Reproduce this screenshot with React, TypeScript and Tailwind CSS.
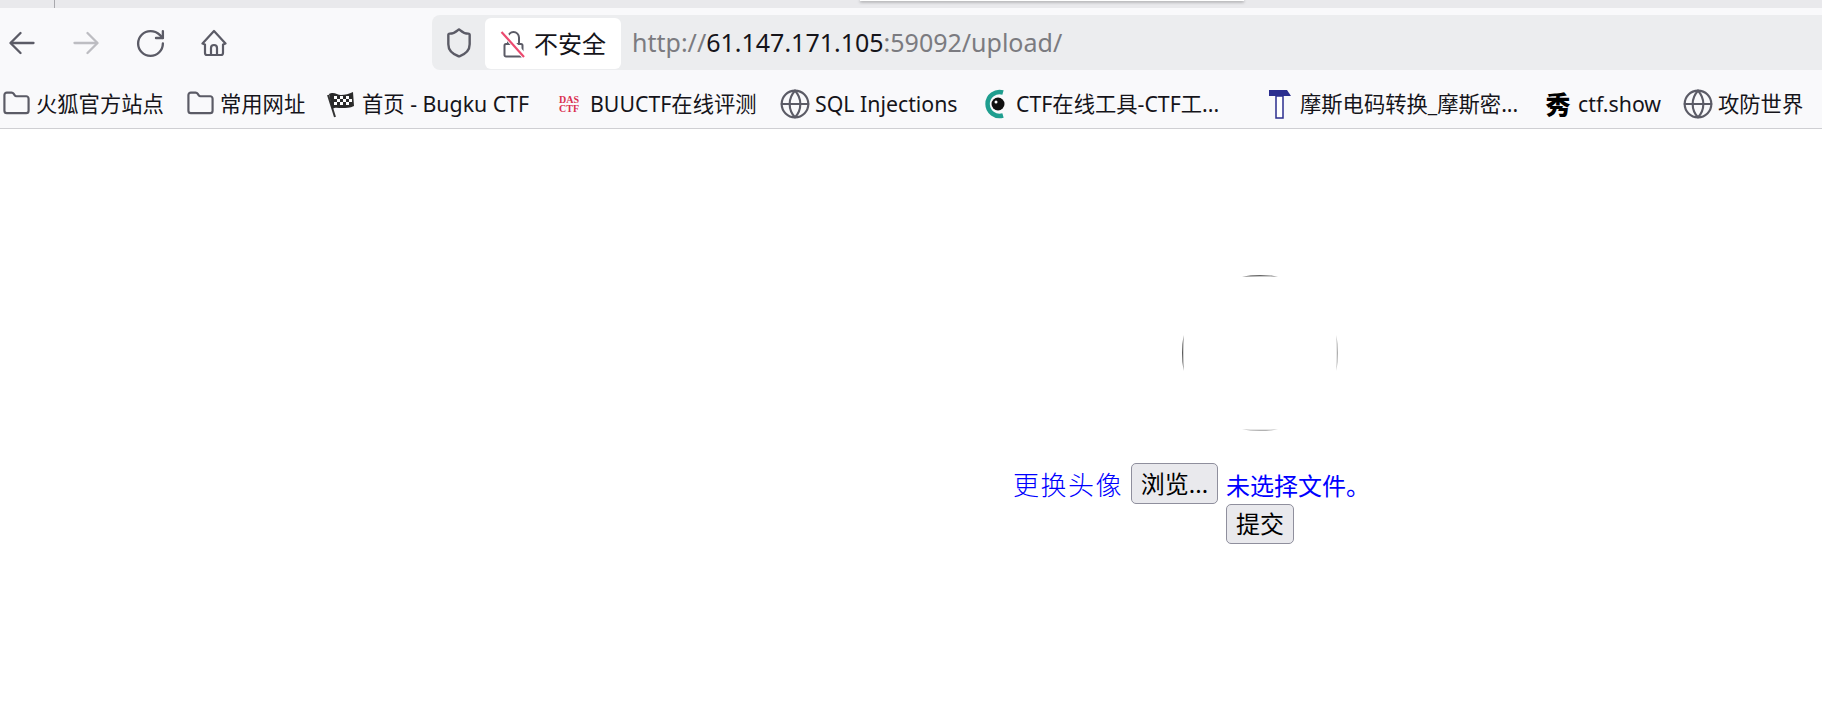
import React from 'react';
import { RotateCw, Shield, Globe, Folder } from 'lucide-react';

const uiFont = "font-['Noto_Sans','Noto_Sans_CJK_SC',sans-serif]";

function NavArrow({ color, flip }: { color: string; flip?: boolean }) {
  return (
    <svg width="26" height="24" viewBox="0 0 26 24" fill="none" stroke={color} strokeWidth="2.300" strokeLinecap="round" strokeLinejoin="round" className={flip ? 'rotate-180' : ''}>
      <path d="M24.500 12H2" />
      <path d="M11.500 2 1.500 12l10 10" />
    </svg>
  );
}

function HomeIcon() {
  return (
    <svg width="26" height="28" viewBox="0 0 26 28" fill="none" stroke="#5b5b66" strokeWidth="2.200" strokeLinejoin="round">
      <path d="M1.500 14.500 13 2l11.500 12.500-2.500 1V24a2 2 0 0 1-2 2H6a2 2 0 0 1-2-2v-8.500z" />
      <path d="M10 26v-7a3 3 0 0 1 6 0v7" />
    </svg>
  );
}

function LockOff() {
  return (
    <svg width="26" height="28" viewBox="0 0 26 28" fill="none">
      <path d="M8 13V7.500a5.500 5.500 0 0 1 11 0V14" stroke="#5b5b66" strokeWidth="2" />
      <path d="M6 14h15a1.500 1.500 0 0 1 1.500 1.500V25a1.500 1.500 0 0 1-1.500 1.500H6A1.500 1.500 0 0 1 4.500 25V15.500A1.500 1.500 0 0 1 6 14z" stroke="#5b5b66" strokeWidth="2" />
      <path d="M4.500 2 27 27" stroke="#fff" strokeWidth="3" />
      <path d="M1.500 2 24 27" stroke="#fff" strokeWidth="4" />
      <path d="M1.500 2 24 27" stroke="#ec4a6f" strokeWidth="2.200" />
    </svg>
  );
}

function FlagIcon() {
  return (
    <svg width="28" height="28" viewBox="0 0 28 28">
      <path d="M1 5 8 27" stroke="#333" strokeWidth="2" />
      <path d="M2 4c5-3 8 1 12 1s8-1 12-3l1 14c-4 2-8 2-12 2s-7-1-10 1z" fill="#2b2b2b" />
      <g fill="#fff">
        <rect x="7" y="6" width="3" height="3" />
        <rect x="13" y="6" width="3" height="3" />
        <rect x="19" y="6" width="3" height="3" />
        <rect x="10" y="9" width="3" height="3" />
        <rect x="16" y="9" width="3" height="3" />
        <rect x="22" y="9" width="3" height="3" />
        <rect x="7" y="12" width="3" height="3" />
        <rect x="13" y="12" width="3" height="3" />
        <rect x="19" y="12" width="3" height="3" />
      </g>
    </svg>
  );
}

function DasIcon() {
  return (
    <svg width="24" height="24" viewBox="0 0 24 24">
      <text x="1" y="11" fontSize="10" fill="#d9304f" fontFamily="Liberation Serif" fontWeight="700">DAS</text>
      <text x="1" y="20" fontSize="10" fill="#d9304f" fontFamily="Liberation Serif" fontWeight="700">CTF</text>
    </svg>
  );
}

function EyeIcon() {
  return (
    <svg width="26" height="30" viewBox="0 0 26 30" fill="none">
      <path d="M20 3.500A12 12 0 1 0 20 26.500" stroke="#1f9e8f" strokeWidth="4.500" />
      <circle cx="15" cy="15" r="6.500" fill="#111" />
      <circle cx="13" cy="13" r="1.500" fill="#fff" />
    </svg>
  );
}

function HammerIcon() {
  return (
    <svg width="24" height="30" viewBox="0 0 24 30" fill="none">
      <path d="M1 1h18l4 6H1z" fill="#2b2e8f" />
      <rect x="8" y="7" width="7" height="22" stroke="#2b2e8f" strokeWidth="1.500" fill="#fff" />
    </svg>
  );
}

function ShowIcon() {
  return <span className="block w-[26px] text-center text-[25px] leading-[28px] font-black text-black">秀</span>;
}

const folderIcon = <Folder size={29} strokeWidth={1.800} color="#5b5b66" className="shrink-0" />;
const globeIcon = <Globe size={32} strokeWidth={1.600} color="#5b5b66" className="shrink-0" />;

const bookmarks = [
  { label: '火狐官方站点', icon: folderIcon, width: 'w-[184px]', box: 'w-[26px]' },
  { label: '常用网址', icon: folderIcon, width: 'w-[140px]', box: 'w-[26px]' },
  { label: '首页 - Bugku CTF', icon: <FlagIcon />, width: 'w-[230px]', box: 'w-[28px]' },
  { label: 'BUUCTF在线评测', icon: <DasIcon />, width: 'w-[225px]', box: 'w-[26px]' },
  { label: 'SQL Injections', icon: globeIcon, width: 'w-[201px]', box: 'w-[26px]' },
  { label: 'CTF在线工具-CTF工...', icon: <EyeIcon />, width: 'w-[284px]', box: 'w-[26px]' },
  { label: '摩斯电码转换_摩斯密...', icon: <HammerIcon />, width: 'w-[278px]', box: 'w-[26px]' },
  { label: 'ctf.show', icon: <ShowIcon />, width: 'w-[140px]', box: 'w-[26px]' },
  { label: '攻防世界', icon: globeIcon, width: 'w-[130px]', box: 'w-[26px]' },
];

function Avatar() {
  return (
    <svg width="156" height="156" viewBox="0 0 156 156" className="block">
      <path d="M60 1.500Q78 -1.100 96 1.500Q78 0.900 60 1.500z" fill="#333" />
      <path d="M1.500 60Q-1.100 78 1.500 96Q0.900 78 1.500 60z" fill="#333" />
      <path d="M154.500 60Q157.100 78 154.500 96Q155.100 78 154.500 60z" fill="#999" />
      <path d="M60 154.500Q78 157.100 96 154.500Q78 155.100 60 154.500z" fill="#999" />
    </svg>
  );
}

export default function App() {
  return (
    <div className={`h-[704px] w-[1822px] overflow-hidden bg-white ${uiFont}`}>
      {/* tab strip */}
      <div className="relative h-2 bg-[#e9e9ec]">
        <div className="absolute left-[54px] top-0 h-2 w-px bg-[#a8a8ad]" />
        <div className="absolute left-[860px] top-0 h-px w-[384px] bg-white shadow-[0_1px_3px_rgba(0,0,0,0.6)]" />
      </div>

      {/* nav bar */}
      <div className="flex h-[62px] items-end bg-[#f9f9fb] pl-[9px]">
        <div className="mb-[13px] flex w-[423px] items-center gap-[38px]">
          <NavArrow color="#5b5b66" />
          <NavArrow color="#bdbdc2" flip />
          <div className="flex h-[28px] w-[26px] items-center justify-center">
            <RotateCw size={33} strokeWidth={1.700} color="#5b5b66" className="shrink-0" />
          </div>
          <HomeIcon />
        </div>
        <div className="flex h-[55px] flex-1 items-center rounded-tl-[8px] rounded-bl-[8px] bg-[#ecedef]">
          <div className="flex w-[53px] justify-center">
            <Shield size={32} strokeWidth={1.800} color="#5b5b66" />
          </div>
          <div className="mt-[2px] flex h-[51px] w-[136px] items-center gap-[8px] rounded-[6px] bg-white pl-[15px]">
            <LockOff />
            <span className="text-[24px] text-[#15141a] whitespace-nowrap">不安全</span>
          </div>
          <div className="pl-[11px] text-[25px] whitespace-nowrap text-[#7b7b80]">
            http://<span className="text-[#15141a]">61.147.171.105</span>:59092/upload/
          </div>
        </div>
      </div>

      {/* bookmarks */}
      <div className="flex h-[59px] items-center border-b border-[#cfcfd3] bg-[#f9f9fb] pt-[9px] pl-[3px]">
        {bookmarks.map((b, i) => (
          <div key={i} className={`flex shrink-0 items-center gap-[7px] ${b.width}`}>
            <div className={`flex h-[28px] items-center justify-center ${b.box}`}>{b.icon}</div>
            <span className="text-[21.300px] text-[#15141a] whitespace-nowrap">{b.label}</span>
          </div>
        ))}
      </div>

      {/* upload form */}
      <main className="pt-[146px] pl-[1013px]">
        <div className="ml-[169px]">
          <Avatar />
        </div>
        <div className="mt-[32px] flex items-start">
          <label className="mt-[5px] mr-[8px] text-[26px] leading-[34px] font-light tracking-[1.500px] text-[#0000ff] whitespace-nowrap">
            更换头像
          </label>
          <button className="mr-[8px] h-[41px] w-[87px] rounded-[5px] border border-[#8f8f9d] bg-[#e9e9ed] text-[24px] leading-none text-black whitespace-nowrap">
            浏览...
          </button>
          <div className="flex flex-col items-start">
            <span className="h-[41px] pt-[5px] text-[24px] leading-[36px] text-[#0000ff] whitespace-nowrap">未选择文件。</span>
            <button className="h-[40px] w-[68px] rounded-[5px] border border-[#8f8f9d] bg-[#e9e9ed] text-[24px] leading-none text-black">
              提交
            </button>
          </div>
        </div>
      </main>
    </div>
  );
}
